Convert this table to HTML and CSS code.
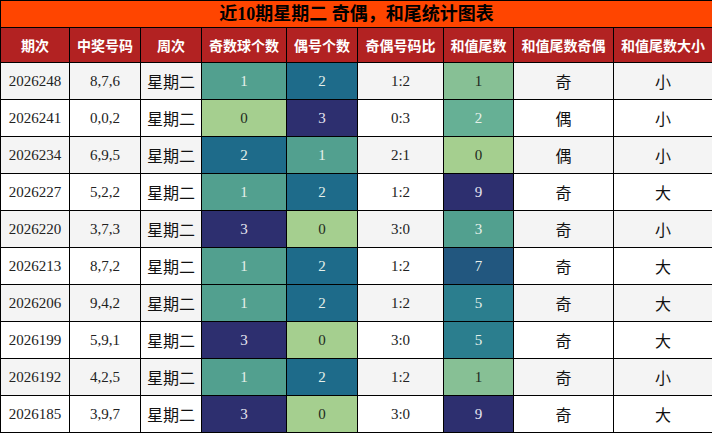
FILE: index.html
```html
<!DOCTYPE html>
<html lang="zh">
<head>
<meta charset="utf-8">
<link rel="stylesheet" href="styles.css">
</head>
<body>
<table class="tbl">
<colgroup>
<col class="w1"><col class="w2"><col class="w3"><col class="w4"><col class="w5"><col class="w6"><col class="w7"><col class="w8"><col class="w9">
</colgroup>
<thead>
<tr><th colspan="9" class="title">近10期星期二 奇偶，和尾统计图表</th></tr>
<tr class="hd"><th>期次</th><th>中奖号码</th><th>周次</th><th>奇数球个数</th><th>偶号个数</th><th>奇偶号码比</th><th>和值尾数</th><th>和值尾数奇偶</th><th>和值尾数大小</th></tr>
</thead>
<tbody>
<tr class="odd"><td>2026248</td><td>8,7,6</td><td class="cn">星期二</td><td class="c3">1</td><td class="c5">2</td><td>1:2</td><td class="c1">1</td><td class="cn">奇</td><td class="cn">小</td></tr>
<tr><td>2026241</td><td>0,0,2</td><td class="cn">星期二</td><td class="c0">0</td><td class="c7">3</td><td>0:3</td><td class="c2">2</td><td class="cn">偶</td><td class="cn">小</td></tr>
<tr class="odd"><td>2026234</td><td>6,9,5</td><td class="cn">星期二</td><td class="c5">2</td><td class="c3">1</td><td>2:1</td><td class="c0">0</td><td class="cn">偶</td><td class="cn">小</td></tr>
<tr><td>2026227</td><td>5,2,2</td><td class="cn">星期二</td><td class="c3">1</td><td class="c5">2</td><td>1:2</td><td class="c7">9</td><td class="cn">奇</td><td class="cn">大</td></tr>
<tr class="odd"><td>2026220</td><td>3,7,3</td><td class="cn">星期二</td><td class="c7">3</td><td class="c0">0</td><td>3:0</td><td class="c3">3</td><td class="cn">奇</td><td class="cn">小</td></tr>
<tr><td>2026213</td><td>8,7,2</td><td class="cn">星期二</td><td class="c3">1</td><td class="c5">2</td><td>1:2</td><td class="c6">7</td><td class="cn">奇</td><td class="cn">大</td></tr>
<tr class="odd"><td>2026206</td><td>9,4,2</td><td class="cn">星期二</td><td class="c3">1</td><td class="c5">2</td><td>1:2</td><td class="c4">5</td><td class="cn">奇</td><td class="cn">大</td></tr>
<tr><td>2026199</td><td>5,9,1</td><td class="cn">星期二</td><td class="c7">3</td><td class="c0">0</td><td>3:0</td><td class="c4">5</td><td class="cn">奇</td><td class="cn">大</td></tr>
<tr class="odd"><td>2026192</td><td>4,2,5</td><td class="cn">星期二</td><td class="c3">1</td><td class="c5">2</td><td>1:2</td><td class="c1">1</td><td class="cn">奇</td><td class="cn">小</td></tr>
<tr><td>2026185</td><td>3,9,7</td><td class="cn">星期二</td><td class="c7">3</td><td class="c0">0</td><td>3:0</td><td class="c7">9</td><td class="cn">奇</td><td class="cn">大</td></tr>
</tbody>
</table>
</body>
</html>
```
FILE: styles.css
```css
html, body { margin: 0; padding: 0; background: #fff; }
body { font-family: "Liberation Serif", "Noto Sans CJK SC", serif; }
.tbl {
  border-collapse: collapse;
  table-layout: fixed;
  width: 712px;
}
.w1 { width: 69px; }
.w2 { width: 71px; }
.w3 { width: 61px; }
.w4 { width: 85px; }
.w5 { width: 71px; }
.w6 { width: 86px; }
.w7 { width: 70px; }
.w8 { width: 100px; }
.w9 { width: 99px; }
.tbl th, .tbl td {
  border: 1px solid #000;
  padding: 0;
  text-align: center;
  overflow: hidden;
  white-space: nowrap;
}
.title {
  background: #ff4500;
  color: #000;
  font-size: 18px;
  font-weight: bold;
  height: 26px;
  line-height: 26px;
}
.hd th {
  background: #b22222;
  color: #fff;
  font-size: 14px;
  font-weight: bold;
  height: 34px;
}
.tbl td {
  height: 36px;
  font-size: 15px;
  color: #222;
}
.tbl td.cn { font-size: 16px; color: #111; }
tr.odd td { background: #f4f4f4; }
tr td.c0 { background: #a5cf8f; color: #1e2a1e; }
tr td.c1 { background: #87c095; color: #1e2a1e; }
tr td.c2 { background: #66b095; color: #e6f0ea; }
tr td.c3 { background: #52a08f; color: #e6f0ea; }
tr td.c4 { background: #2b7e8e; color: #e6f0ea; }
tr td.c5 { background: #1e6b8a; color: #e6f0ea; }
tr td.c6 { background: #22577f; color: #e6f0ea; }
tr td.c7 { background: #2d2f6f; color: #e6e6f0; }
```
